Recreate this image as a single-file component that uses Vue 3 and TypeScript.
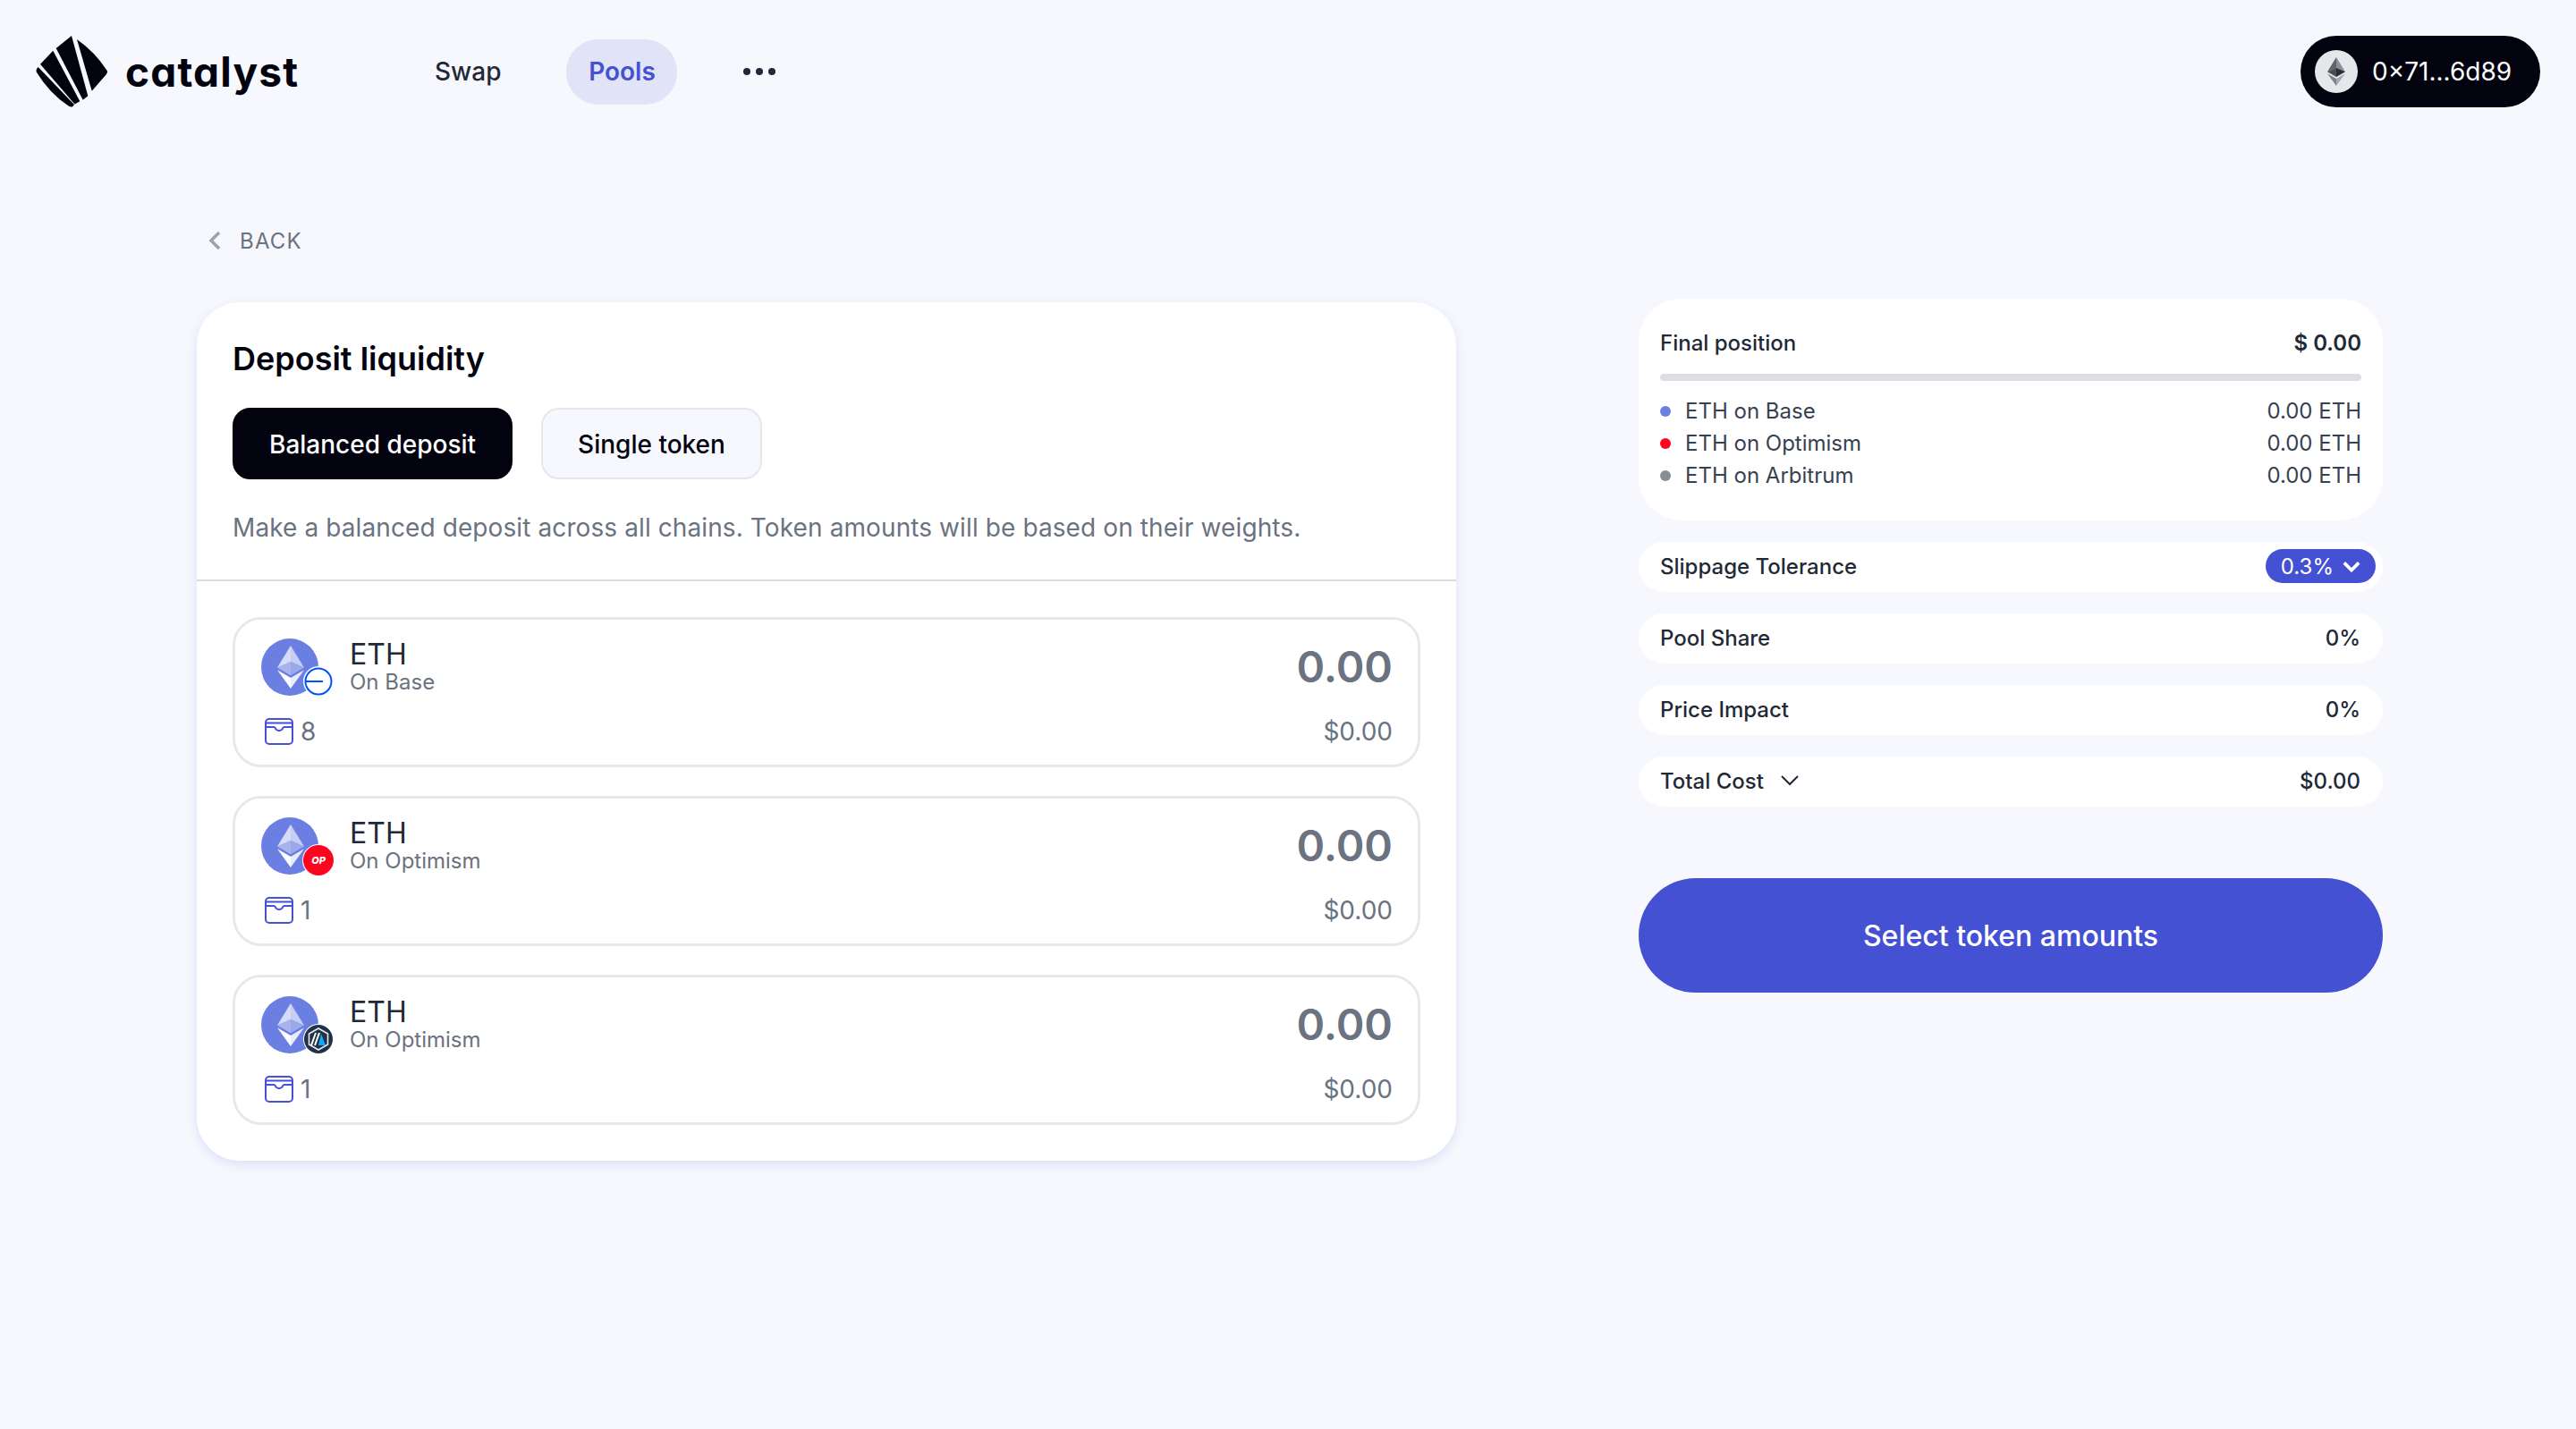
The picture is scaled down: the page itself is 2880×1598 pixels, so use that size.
<script setup lang="ts">
type Chain = "base" | "op" | "arb";

const tokens: { chain: Chain; sub: string; balance: string }[] = [
  { chain: "base", sub: "On Base", balance: "8" },
  { chain: "op", sub: "On Optimism", balance: "1" },
  { chain: "arb", sub: "On Optimism", balance: "1" },
];

const legend = [
  { label: "ETH on Base", color: "#6b7fe3" },
  { label: "ETH on Optimism", color: "#ff0420" },
  { label: "ETH on Arbitrum", color: "#868e96" },
];
</script>

<template>
  <div class="page">
    <header class="header">
      <div class="brand">
        <svg class="logo" viewBox="0 0 80 80" fill="#02030f">
          <path d="M46 4Q66 18 79 38Q81 40 79 43L62.700 61.700Z" />
          <path d="M40 0L58.300 67.300L52.700 71.700L22.700 14Z" />
          <path d="M19.300 16.700L49.300 73.300L43.500 76.500L5 31.700Z" />
          <path d="M2.700 35L43 77L41 79.300Q38 80 36 78Q16 65 1 41Q-.5 38 2.700 35Z" />
        </svg>
        <span class="wordmark">catalyst</span>
      </div>
      <nav class="nav">
        <a class="nav-link">Swap</a>
        <a class="nav-link nav-link--active">Pools</a>
        <svg class="more" viewBox="0 0 36 8">
          <circle cx="4" cy="4" r="4" />
          <circle cx="18" cy="4" r="4" />
          <circle cx="32" cy="4" r="4" />
        </svg>
      </nav>
      <button class="wallet">
        <span class="wallet-icon">
          <svg viewBox="9 4 15 24" width="20" height="32">
            <path fill="#8a8f98" d="M16.498 4v8.87l7.497 3.35z" />
            <path fill="#5f646c" d="M16.498 4L9 16.22l7.498-3.35z" />
            <path fill="#a6abb3" d="M16.498 21.968v6.027L24 17.616z" />
            <path fill="#7d828a" d="M16.498 27.995v-6.028L9 17.616z" />
            <path fill="#2c2f36" d="M16.498 20.573l7.497-4.353-7.497-3.348z" />
            <path fill="#4a4d55" d="M9 16.22l7.498 4.353v-7.701z" />
          </svg>
        </span>
        <span>0×71...6d89</span>
      </button>
    </header>

    <div class="back">
      <svg viewBox="0 0 14 20" width="14" height="20">
        <path d="M12 1L3 10l9 9" fill="none" stroke="#9ca3af" stroke-width="3.500" />
      </svg>
      <span>BACK</span>
    </div>

    <main class="main">
      <section class="deposit">
        <div class="deposit-top">
          <h1 class="title">Deposit liquidity</h1>
          <div class="tabs">
            <button class="tab tab--active">Balanced deposit</button>
            <button class="tab">Single token</button>
          </div>
          <p class="desc">Make a balanced deposit across all chains. Token amounts will be based on their weights.</p>
        </div>
        <div class="token-list">
          <div v-for="(t, i) in tokens" :key="i" class="token">
            <div class="token-row">
              <div class="token-name">
                <div class="token-icon">
                  <svg viewBox="0 0 32 32" width="64" height="64">
                    <circle cx="16" cy="16" r="16" fill="#6b7fe3" />
                    <path fill="#fff" fill-opacity=".62" d="M16.498 4v8.87l7.497 3.35z" />
                    <path fill="#fff" fill-opacity=".72" d="M16.498 4L9 16.22l7.498-3.35z" />
                    <path fill="#fff" fill-opacity=".85" d="M16.498 21.968v6.027L24 17.616z" />
                    <path fill="#fff" d="M16.498 27.995v-6.028L9 17.616z" />
                    <path fill="#fff" fill-opacity=".32" d="M16.498 20.573l7.497-4.353-7.497-3.348z" />
                    <path fill="#fff" fill-opacity=".42" d="M9 16.220l7.498 4.353v-7.701z" />
                  </svg>
                  <span v-if="t.chain === 'base'" class="badge badge--base">
                    <svg viewBox="0 0 32 32" width="32" height="32">
                      <circle cx="16" cy="16" r="14.500" fill="#fff" stroke="#0052ff" stroke-width="2" />
                      <path d="M2 16h19" stroke="#0052ff" stroke-width="2" />
                    </svg>
                  </span>
                  <span v-else-if="t.chain === 'op'" class="badge badge--op">OP</span>
                  <span v-else class="badge badge--arb">
                    <svg viewBox="0 0 32 32" width="32" height="32">
                      <circle cx="16" cy="16" r="16" fill="#213147" />
                      <path d="M16 4l10.500 6v12L16 28 5.500 22V10z" fill="#213147" stroke="#e8eaee" stroke-width="1.600" />
                      <path d="M13 9l-5 14M17 9l-5 14" stroke="#fff" stroke-width="2" fill="none" />
                      <path d="M19 10l5 13h-8z" fill="#12aaff" />
                    </svg>
                  </span>
                </div>
                <div class="token-text">
                  <span class="symbol">ETH</span>
                  <span class="sub">{{ t.sub }}</span>
                </div>
              </div>
              <span class="amount">0.00</span>
            </div>
            <div class="token-row">
              <div class="balance">
                <svg viewBox="0 0 32 30" width="32" height="30" fill="none" stroke="#4551d3" stroke-width="2">
                  <rect x="1" y="1" width="30" height="28" rx="4" />
                  <path d="M1 5.500h30M1 10h9c1 0 1.500 .5 2 1.500c.6 1.600 2 2.500 4 2.500s3.400-.9 4-2.500c.5-1 1-1.500 2-1.500h9" />
                </svg>
                <span>{{ t.balance }}</span>
              </div>
              <span class="usd">$0.00</span>
            </div>
          </div>
        </div>
      </section>

      <aside class="summary">
        <div class="position">
          <div class="row-line">
            <span>Final position</span>
            <span class="strong">$ 0.00</span>
          </div>
          <div class="bar"></div>
          <ul class="legend">
            <li v-for="l in legend" :key="l.label">
              <i class="dot" :style="{ background: l.color }"></i>
              <span class="legend-label">{{ l.label }}</span>
              <span>0.00 ETH</span>
            </li>
          </ul>
        </div>

        <div class="stat stat--slippage">
          <span>Slippage Tolerance</span>
          <span class="slippage">
            0.3%
            <svg viewBox="0 0 22 14" width="20" height="13">
              <path d="M2 2.500l9 9 9-9" fill="none" stroke="#fff" stroke-width="4" />
            </svg>
          </span>
        </div>
        <div class="stat"><span>Pool Share</span><span class="strong">0%</span></div>
        <div class="stat"><span>Price Impact</span><span class="strong">0%</span></div>
        <div class="stat">
          <span class="total">
            Total Cost
            <svg viewBox="0 0 20 12" width="20" height="12">
              <path d="M1 1l9 9 9-9" fill="none" stroke="#1f2937" stroke-width="2" />
            </svg>
          </span>
          <span class="strong">$0.00</span>
        </div>

        <button class="submit">Select token amounts</button>
      </aside>
    </main>
  </div>
</template>

<style>
body {
  background: #f6f8fd;
}
</style>

<style scoped>
* {
  box-sizing: border-box;
}
.page {
  width: 2880px;
  min-height: 1598px;
  font-family: Inter, "Liberation Sans", sans-serif;
  color: #1f2937;
  background: #f6f8fd;
  overflow: hidden;
}

.header {
  display: flex;
  align-items: center;
  height: 160px;
  padding: 0 40px;
}
.brand {
  display: flex;
  align-items: center;
  gap: 20px;
  width: 446px;
}
.logo {
  width: 80px;
  height: 80px;
  flex: none;
}
.wordmark {
  font-family: Inter, sans-serif;
  font-feature-settings: "cv11";
  font-size: 46px;
  font-weight: 700;
  letter-spacing: 1.200px;
  color: #02030f;
  line-height: 1;
}
.nav {
  display: flex;
  align-items: center;
  font-size: 28px;
  font-weight: 500;
  flex: 1;
}
.nav-link {
  color: #1f2937;
  margin-right: 73px;
}
.nav-link--active {
  display: flex;
  align-items: center;
  justify-content: center;
  width: 124px;
  height: 73px;
  margin-right: 74px;
  border-radius: 36px;
  background: #e1e4f6;
  color: #4551d3;
  font-weight: 600;
}
.more {
  width: 36px;
  height: 8px;
  fill: #1f2937;
}
.wallet {
  display: flex;
  align-items: center;
  gap: 16px;
  width: 268px;
  height: 80px;
  padding: 0 16px;
  border: 0;
  border-radius: 40px;
  background: #02030f;
  color: #fff;
  font: 400 28px Inter, sans-serif;
}
.wallet-icon {
  display: flex;
  align-items: center;
  justify-content: center;
  width: 48px;
  height: 48px;
  border-radius: 50%;
  background: #e5e7eb;
}

.back {
  display: flex;
  align-items: center;
  gap: 21px;
  height: 36px;
  margin: 91px 0 0 233px;
  font-size: 24px;
  letter-spacing: 1.200px;
  color: #6b7280;
}

.main {
  display: flex;
  align-items: flex-start;
  margin-top: 47px;
  padding-left: 220px;
}

.deposit {
  width: 1408px;
  margin-top: 4px;
  border-radius: 48px;
  background: #fff;
  box-shadow: 0 4px 12px rgba(69, 81, 211, 0.14);
}
.deposit-top {
  padding: 41px 40px 38px;
  border-bottom: 2px solid #d9dbe0;
}
.title {
  margin: 0;
  font-size: 36px;
  line-height: 44px;
  font-weight: 600;
  color: #02030f;
}
.tabs {
  display: flex;
  gap: 32px;
  margin-top: 33px;
}
.tab {
  height: 80px;
  padding: 1px 39px 0;
  border: 2px solid #e5e7eb;
  border-radius: 20px;
  background: #f6f8fd;
  color: #02030f;
  font: 500 28px Inter, sans-serif;
}
.tab--active {
  border-color: #02030f;
  background: #02030f;
  color: #fff;
}
.desc {
  margin: 34px 0 0;
  font-size: 28px;
  line-height: 40px;
  letter-spacing: 0.100px;
  color: #6b7280;
}

.token-list {
  display: flex;
  flex-direction: column;
  gap: 32px;
  padding: 40px;
}
.token {
  display: flex;
  flex-direction: column;
  justify-content: space-between;
  height: 168px;
  padding: 20px 28px 20px 30px;
  border: 3px solid #e7e8ee;
  border-radius: 32px;
}
.token-row {
  display: flex;
  align-items: center;
  justify-content: space-between;
}
.token-name {
  display: flex;
  align-items: center;
  gap: 35px;
  margin-top: 1px;
}
.token-icon {
  position: relative;
  width: 64px;
  height: 64px;
  margin-left: -1px;
}
.token-icon > svg {
  display: block;
}
.token-text {
  display: flex;
  flex-direction: column;
}
.symbol {
  font-size: 32px;
  line-height: 34px;
  color: #1f2937;
}
.sub {
  font-size: 24px;
  line-height: 28px;
  color: #6b7280;
}
.amount {
  font-size: 48px;
  font-weight: 600;
  color: #6b7280;
}
.balance {
  display: flex;
  align-items: center;
  gap: 8px;
  margin-left: 3px;
  font-size: 28px;
  color: #6b7280;
}
.usd {
  font-size: 28px;
  color: #6b7280;
}
.badge {
  position: absolute;
  display: flex;
  align-items: center;
  justify-content: center;
  left: 48px;
  top: 32px;
  width: 32px;
  height: 32px;
  border-radius: 50%;
  background: #fff;
  box-shadow: 0 0 0 1px #fff;
}
.badge--op {
  left: 47px;
  top: 31px;
  width: 34px;
  height: 34px;
  background: #ff0420;
  color: #fff;
  font-size: 11px;
  font-weight: 800;
  font-style: italic;
}

.summary {
  width: 832px;
  margin-left: 204px;
}
.position {
  height: 248px;
  padding: 32px 24px 0;
  border-radius: 48px;
  background: #fff;
  font-size: 24px;
}
.row-line {
  display: flex;
  justify-content: space-between;
  line-height: 36px;
  font-weight: 500;
}
.strong {
  font-weight: 600;
}
.bar {
  height: 8px;
  margin-top: 16px;
  border-radius: 4px;
  background: #dddee4;
}
.legend {
  margin: 16px 0 0;
  padding: 0;
  list-style: none;
}
.legend li {
  display: flex;
  align-items: center;
  line-height: 36px;
  color: #374151;
}
.dot {
  width: 12px;
  height: 12px;
  margin-right: 16px;
  border-radius: 50%;
}
.legend-label {
  flex: 1;
}
.stat {
  display: flex;
  align-items: center;
  justify-content: space-between;
  height: 56px;
  margin-top: 24px;
  padding: 0 25px 2px 24px;
  border-radius: 28px;
  background: #fff;
  font-size: 24px;
  font-weight: 500;
}
.stat .strong {
  font-weight: 500;
}
.stat--slippage {
  padding-right: 8px;
}
.slippage {
  display: flex;
  align-items: center;
  gap: 10px;
  height: 38px;
  padding: 0 17px;
  border-radius: 19px;
  background: #4551d3;
  color: #fff;
  font-weight: 400;
}
.total {
  display: flex;
  align-items: center;
  gap: 19px;
}
.submit {
  display: block;
  width: 100%;
  height: 128px;
  margin-top: 80px;
  border: 0;
  border-radius: 64px;
  background: #4551d3;
  color: #fff;
  font: 500 32px Inter, sans-serif;
}
</style>
